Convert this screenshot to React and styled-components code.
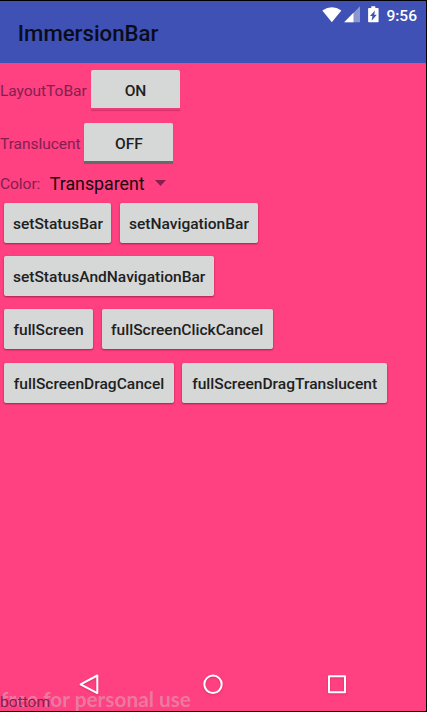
import React from "react";
import styled, { createGlobalStyle } from "styled-components";

const GlobalStyle = createGlobalStyle`
  * { box-sizing: border-box; }
  body { margin: 0; background: #000; font-family: Roboto, "Liberation Sans", sans-serif; }
`;

const Screen = styled.main`
  position: relative;
  display: flex;
  flex-direction: column;
  width: 427px;
  height: 712px;
  border: solid #000;
  border-width: 1px 1px 1px 0;
  background: #ff4081;
  overflow: hidden;
`;

const Header = styled.header`
  display: flex;
  justify-content: space-between;
  height: 62px;
  flex: none;
  padding: 0 9px 0 17.8px;
  background: #3f51b5;
`;

const Title = styled.h1`
  margin: 19px 0 0;
  font-size: 22.2px;
  line-height: 26px;
  font-weight: 500;
  color: #0a0c1b;
`;

const StatusBar = styled.div`
  display: flex;
  align-items: center;
  height: 27px;
  padding-top: 1px;
  color: #fff;
`;

const Clock = styled.time`
  margin-left: 4px;
  padding-top: 2px;
  font-size: 15.56px;
  font-weight: 500;
`;

const Content = styled.section`
  display: flex;
  flex-direction: column;
  flex: 1;
`;

const Row = styled.div`
  display: flex;
  align-items: center;
  flex: none;
  height: ${(p) => (p.$compact ? 26.5 : 53.3)}px;
`;

const Label = styled.span`
  padding-top: 2px;
  font-size: 15.56px;
  line-height: 20px;
  letter-spacing: -0.06px;
  color: #841f50;
  white-space: nowrap;
`;

const Button = styled.button`
  position: relative;
  height: 40px;
  width: ${(p) => p.$width}px;
  margin: 0 4.4px;
  padding: 2px 0 0;
  border: 0;
  border-radius: 2px;
  background: #d6d7d7;
  box-shadow: 0 1px 2px rgba(80, 0, 35, 0.5);
  font: 500 15.56px/20px Roboto, "Liberation Sans", sans-serif;
  color: #202121;
  white-space: nowrap;
`;

const Toggle = styled(Button)`
  margin-left: ${(p) => (p.$on ? 4.4 : 3.9)}px;
  border-radius: 2px 2px 0 0;
  box-shadow: 0 1px 1px rgba(80, 0, 35, 0.25);
  background: linear-gradient(
    #d6d7d7 0 38px,
    ${(p) => (p.$on ? "#e93c78" : "#686868")} 38px 40px
  );
`;

const Spinner = styled.div`
  display: flex;
  align-items: center;
  margin-left: 9.5px;
  padding-top: 2px;
  font-size: 17.78px;
  line-height: 22px;
  color: #20080f;
`;

const Caret = styled.svg`
  margin: -2px 0 0 10px;
`;

const NavBar = styled.nav`
  position: absolute;
  left: 0;
  right: 0;
  bottom: 0;
  height: 54px;
  display: flex;
  justify-content: center;
  align-items: center;
  gap: 100px;
  filter: drop-shadow(0 1px 1px rgba(120, 0, 50, 0.25));
`;

const Bottom = styled(Label)`
  position: absolute;
  left: 0;
  bottom: -1px;
  letter-spacing: 0;
  color: #841f50;
`;

const Watermark = styled.span`
  position: absolute;
  left: 1px;
  bottom: -2px;
  font: 700 20.8px/28px Lato, sans-serif;
  color: rgba(225, 155, 180, 0.65);
  white-space: nowrap;
`;

const actionRows = [
  [["setStatusBar", 107], ["setNavigationBar", 137.5]],
  [["setStatusAndNavigationBar", 209.5]],
  [["fullScreen", 88.5], ["fullScreenClickCancel", 171]],
  [["fullScreenDragCancel", 169.3], ["fullScreenDragTranslucent", 204.4]],
];

function StatusIcons() {
  return (
    <svg width="60" height="20" viewBox="0 0 60 20" fill="#fff">
      <path d="M0.3 5.4Q10 -1 19.4 5.4L9.8 17.2Z" />
      <path d="M38 1.3V17.2H22.2Z" opacity="0.4" />
      <path d="M31.5 7.8V17.2H22.2Z" />
      <path
        fillRule="evenodd"
        d="M49.3 1.2h4v1.7h2.5q.8 0 .8.8v12.7q0 .8-.8.8h-8.9q-.8 0-.8-.8V3.7q0-.8.8-.8h2.4ZM53 5.5l-5 5.5h2.4l-.8 4.7 5.2-6h-2.6Z"
      />
    </svg>
  );
}

export default function App() {
  return (
    <>
      <GlobalStyle />
      <Screen>
        <Header>
          <Title>ImmersionBar</Title>
          <StatusBar>
            <StatusIcons />
            <Clock>9:56</Clock>
          </StatusBar>
        </Header>
        <Content>
          <Row>
            <Label>LayoutToBar</Label>
            <Toggle $width={89} $on>ON</Toggle>
          </Row>
          <Row>
            <Label>Translucent</Label>
            <Toggle $width={89}>OFF</Toggle>
          </Row>
          <Row $compact>
            <Label>Color:</Label>
            <Spinner>
              Transparent
              <Caret width="11" height="6" viewBox="0 0 11 6">
                <path d="M0 0H11L5.5 6Z" fill="#841f50" />
              </Caret>
            </Spinner>
          </Row>
          {actionRows.map((row, i) => (
            <Row key={i}>
              {row.map(([name, width]) => (
                <Button key={name} $width={width}>{name}</Button>
              ))}
            </Row>
          ))}
        </Content>
        <Watermark>free for personal use</Watermark>
        <Bottom>bottom</Bottom>
        <NavBar>
          <svg width="24" height="24" viewBox="0 0 24 24" fill="none" stroke="#fff" strokeWidth="2" strokeLinejoin="round">
            <path d="M20.3 3.5V21.1L3.6 12.3Z" />
          </svg>
          <svg width="24" height="24" viewBox="0 0 24 24" fill="none" stroke="#fff" strokeWidth="2">
            <circle cx="12" cy="12.3" r="8.7" />
          </svg>
          <svg width="24" height="24" viewBox="0 0 24 24" fill="none" stroke="#fff" strokeWidth="2" strokeLinejoin="round">
            <rect x="4" y="4.3" width="16" height="16" />
          </svg>
        </NavBar>
      </Screen>
    </>
  );
}
